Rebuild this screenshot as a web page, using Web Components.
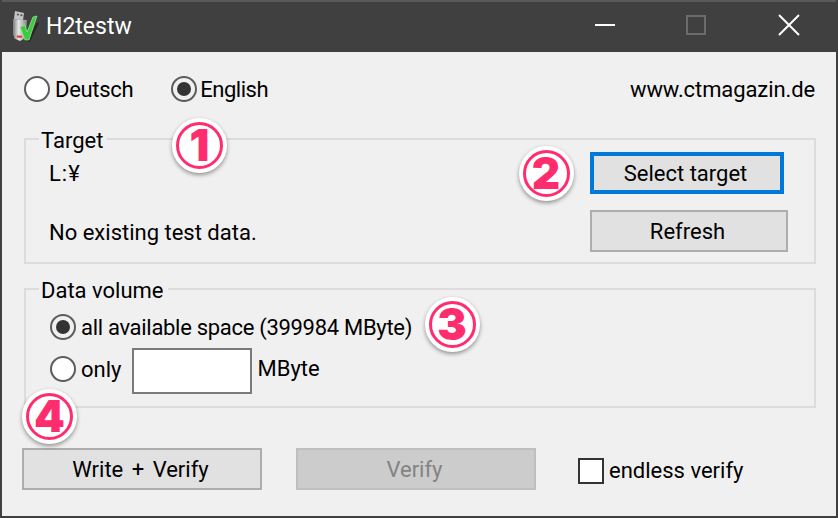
<!DOCTYPE html>
<html lang="en">
<head>
<meta charset="utf-8">
<title>H2testw</title>
<style>
  html, body { margin: 0; padding: 0; background: #f0f0f0; }
</style>
</head>
<body>
<h2-window>
  <h2-lang-row slot="top">
    <h2-radio style="letter-spacing: -.3px">Deutsch</h2-radio>
    <h2-radio checked style="margin-left: 38px; letter-spacing: -.5px; --gap: 3px">English</h2-radio>
    <span slot="end" style="letter-spacing: -.1px">www.ctmagazin.de</span>
  </h2-lang-row>

  <h2-group label="Target" style="height: 126px; margin-top: 36px">
    <h2-target-panel>
      <span slot="path" style="letter-spacing: 1px">L:¥</span>
      <span slot="status">No existing test data.</span>
      <h2-button slot="actions" focused style="width: 194px">Select target</h2-button>
      <h2-button slot="actions" style="width: 198px">Refresh</h2-button>
    </h2-target-panel>
  </h2-group>

  <h2-group label="Data volume" style="margin-top: 24px">
    <h2-volume-panel>
      <h2-radio checked style="letter-spacing: -.3px">all available space (399984 MByte)</h2-radio>
      <h2-radio slot="only">only</h2-radio>
      <h2-input slot="only"></h2-input>
      <span slot="only" class="unit">MByte</span>
    </h2-volume-panel>
  </h2-group>

  <h2-action-row>
    <h2-button style="width: 240px; word-spacing: 3px">Write + Verify</h2-button>
    <h2-button disabled style="width: 240px; margin-left: 34px">Verify</h2-button>
    <h2-checkbox style="margin-left: 42px">endless verify</h2-checkbox>
  </h2-action-row>

  <h2-badge slot="overlay" cx="199.5" cy="145">1</h2-badge>
  <h2-badge slot="overlay" cx="546" cy="173">2</h2-badge>
  <h2-badge slot="overlay" cx="452" cy="324">3</h2-badge>
  <h2-badge slot="overlay" cx="49.5" cy="416">4</h2-badge>
</h2-window>

<script>
const FONT = 'Roboto, "Noto Sans", sans-serif'

/* small helper, every element below only differs in its template */
function define (name, html, Base = HTMLElement) {
  const template = document.createElement('template')
  template.innerHTML = html
  window.customElements.define(name, class extends Base {
    constructor () {
      super()
      this.attachShadow({ mode: 'open' })
      this.shadowRoot.appendChild(template.content.cloneNode(true))
    }
  })
}

define('h2-window', `
  <style>
    :host {
      display: block;
      position: relative;
      width: 838px;
      height: 518px;
      box-sizing: border-box;
      overflow: hidden;
      background: #f0f0f0;
      border: solid #404040;
      border-width: 0 2px 2px;
      color: #000;
      font: 22px/26px ${FONT};
    }
    main { padding: 24px 20px 0 20px; }
  </style>
  <h2-titlebar></h2-titlebar>
  <main><slot name="top"></slot><slot></slot></main>
  <slot name="overlay"></slot>
`)

define('h2-titlebar', `
  <style>
    :host {
      display: flex;
      align-items: center;
      height: 52px;
      margin: 0 -2px;
      padding-left: 12px;
      box-sizing: border-box;
      background: #404040;
      border-top: 2px solid #5a5a5a;
      color: #fff;
      font-size: 23px;
    }
    .title { margin-left: 5px; flex: 1; }
    .controls { display: flex; }
    .control { display: block; width: 92px; height: 50px; }
    svg { display: block; }
  </style>
  <svg width="29" height="36" viewBox="0 0 29 36">
    <defs>
      <linearGradient id="body" x1="0" x2="1" y1="0" y2="0">
        <stop offset="0" stop-color="#7d7d7d"/>
        <stop offset=".4" stop-color="#e8e8e8"/>
        <stop offset="1" stop-color="#858585"/>
      </linearGradient>
    </defs>
    <path d="M3 2l9 2-1 7-9-1z" fill="#c4c4c4"/>
    <path d="M5 4.500l2 .4-.2 1.600-2-.3zM8.500 5.200l2 .4-.2 1.600-2-.3z" fill="#555"/>
    <path d="M1 10l14 1-1.500 18L8 32l-5.500-2.500L1 25z" fill="url(#body)"/>
    <path d="M5 26.500l5 .3-.2 2-5-.3z" fill="#e2352f"/>
    <path d="M13 32l5 .5 9-18-2-1z" fill="#1c1c1c" opacity=".7"/>
    <path d="M8 18l5-2 2 7 6-15 4-1-8 24h-4z" fill="#3ccb3f" stroke="#a5e8a3" stroke-width=".7"/>
  </svg>
  <span class="title">H2testw</span>
  <div class="controls">
    <svg class="control" viewBox="0 0 92 50"><path d="M33 22h20v2H33z" fill="#fff"/></svg>
    <svg class="control" viewBox="0 0 92 50"><path d="M33 14h18v18H33z" fill="none" stroke="#6b6b6b" stroke-width="2"/></svg>
    <svg class="control" viewBox="0 0 92 50"><path d="M33 13l20 20M53 13L33 33" fill="none" stroke="#fff" stroke-width="2"/></svg>
  </div>
`)

define('h2-lang-row', `
  <style>
    :host { display: flex; align-items: center; height: 26px; padding-left: 2px; }
    .end { margin-left: auto; padding: 2px 1px 0 0; }
  </style>
  <slot></slot>
  <div class="end"><slot name="end"></slot></div>
`)

define('h2-radio', `
  <style>
    :host { display: inline-flex; align-items: center; height: 26px; gap: var(--gap, 5px); white-space: nowrap; }
    span { padding-top: 2px; }
    i {
      display: flex;
      align-items: center;
      justify-content: center;
      width: 26px;
      height: 26px;
      box-sizing: border-box;
      border: 2px solid #5c5c5c;
      border-radius: 50%;
      background: #fff;
    }
    :host([checked]) i { background: #f0f0f0; }
    :host([checked]) i::after {
      content: "";
      width: 14px;
      height: 14px;
      border-radius: 50%;
      background: #333;
    }
  </style>
  <i></i><span><slot></slot></span>
`)

define('h2-group', `
  <style>
    :host {
      display: block;
      margin-left: 2px;
      box-sizing: border-box;
      border: 2px solid #dcdcdc;
    }
    .label {
      display: table;
      height: 32px;
      margin: -15px 0 -17px 13px;
      padding: 0 4px 0 2px;
      line-height: 32px;
      background: linear-gradient(#f0f0f0, #f0f0f0) 0 0 / 100% 30px no-repeat;
    }
  </style>
  <div class="label"></div>
  <slot></slot>
`, class extends HTMLElement {
  connectedCallback () {
    this.shadowRoot.querySelector('.label').textContent = this.getAttribute('label')
  }
})

define('h2-target-panel', `
  <style>
    :host { display: flex; justify-content: space-between; padding: 12px 26px 0 23px; }
    .text { display: flex; flex-direction: column; }
    .path { margin-top: 9px; height: 26px; }
    .status { margin-top: 33px; }
    .actions { display: flex; flex-direction: column; gap: 16px; width: 198px; }
  </style>
  <div class="text">
    <div class="path"><slot name="path"></slot></div>
    <div class="status"><slot name="status"></slot></div>
  </div>
  <div class="actions"><slot name="actions"></slot></div>
`)

define('h2-volume-panel', `
  <style>
    :host { display: block; padding: 24px 0 12px 24px; }
    .only { display: flex; align-items: center; margin-top: 8px; }
    slot[name="only"]::slotted(h2-radio) { margin-bottom: 4px; }
    ::slotted(h2-input) { margin: 0 5px 0 11px; }
    ::slotted(.unit) { margin-top: -4px; }
  </style>
  <slot></slot>
  <div class="only"><slot name="only"></slot></div>
`)

define('h2-input', `
  <style>
    :host {
      display: block;
      width: 120px;
      height: 46px;
      box-sizing: border-box;
      border: 2px solid #7a7a7a;
      background: #fff;
    }
  </style>
`)

define('h2-button', `
  <style>
    :host {
      display: flex;
      align-items: center;
      justify-content: center;
      height: 42px;
      padding: 2px 3px 0 0;
      box-sizing: border-box;
      border: 2px solid #adadad;
      background: #e1e1e1;
    }
    :host([focused]) { border: 4px solid #0078d7; }
    :host([disabled]) { border-color: #bfbfbf; background: #cccccc; color: #838383; }
  </style>
  <slot></slot>
`)

define('h2-action-row', `
  <style>
    :host { display: flex; align-items: center; height: 42px; margin-top: 40px; }
    ::slotted(h2-checkbox) { margin-top: 4px; }
  </style>
  <slot></slot>
`)

define('h2-checkbox', `
  <style>
    :host { display: inline-flex; align-items: center; gap: 5px; white-space: nowrap; }
    i {
      display: block;
      width: 26px;
      height: 26px;
      box-sizing: border-box;
      border: 2px solid #333;
      background: #fff;
    }
  </style>
  <i></i><span><slot></slot></span>
`)

/* the red numbered marks lie over the window, so they keep free coordinates */
define('h2-badge', `
  <style>
    :host {
      display: flex;
      align-items: center;
      justify-content: center;
      position: absolute;
      width: 55px;
      height: 55px;
      margin: -27.5px 0 0 -27.5px;
      box-sizing: border-box;
      border: 4px solid #fff;
      border-radius: 50%;
      background: #fff;
      box-shadow: 0 2px 4px rgba(0, 0, 0, .4);
    }
    span {
      display: flex;
      align-items: center;
      justify-content: center;
      width: 47px;
      height: 47px;
      box-sizing: border-box;
      border: 3px solid #ff2d6e;
      border-radius: 50%;
      color: #ff2d6e;
      font: 900 44px/1 Inter, "Liberation Sans", sans-serif;
    }
  </style>
  <span><slot></slot></span>
`, class extends HTMLElement {
  connectedCallback () {
    this.style.left = (this.getAttribute('cx') - 2) + 'px'
    this.style.top = this.getAttribute('cy') + 'px'
  }
})
</script>
</body>
</html>
